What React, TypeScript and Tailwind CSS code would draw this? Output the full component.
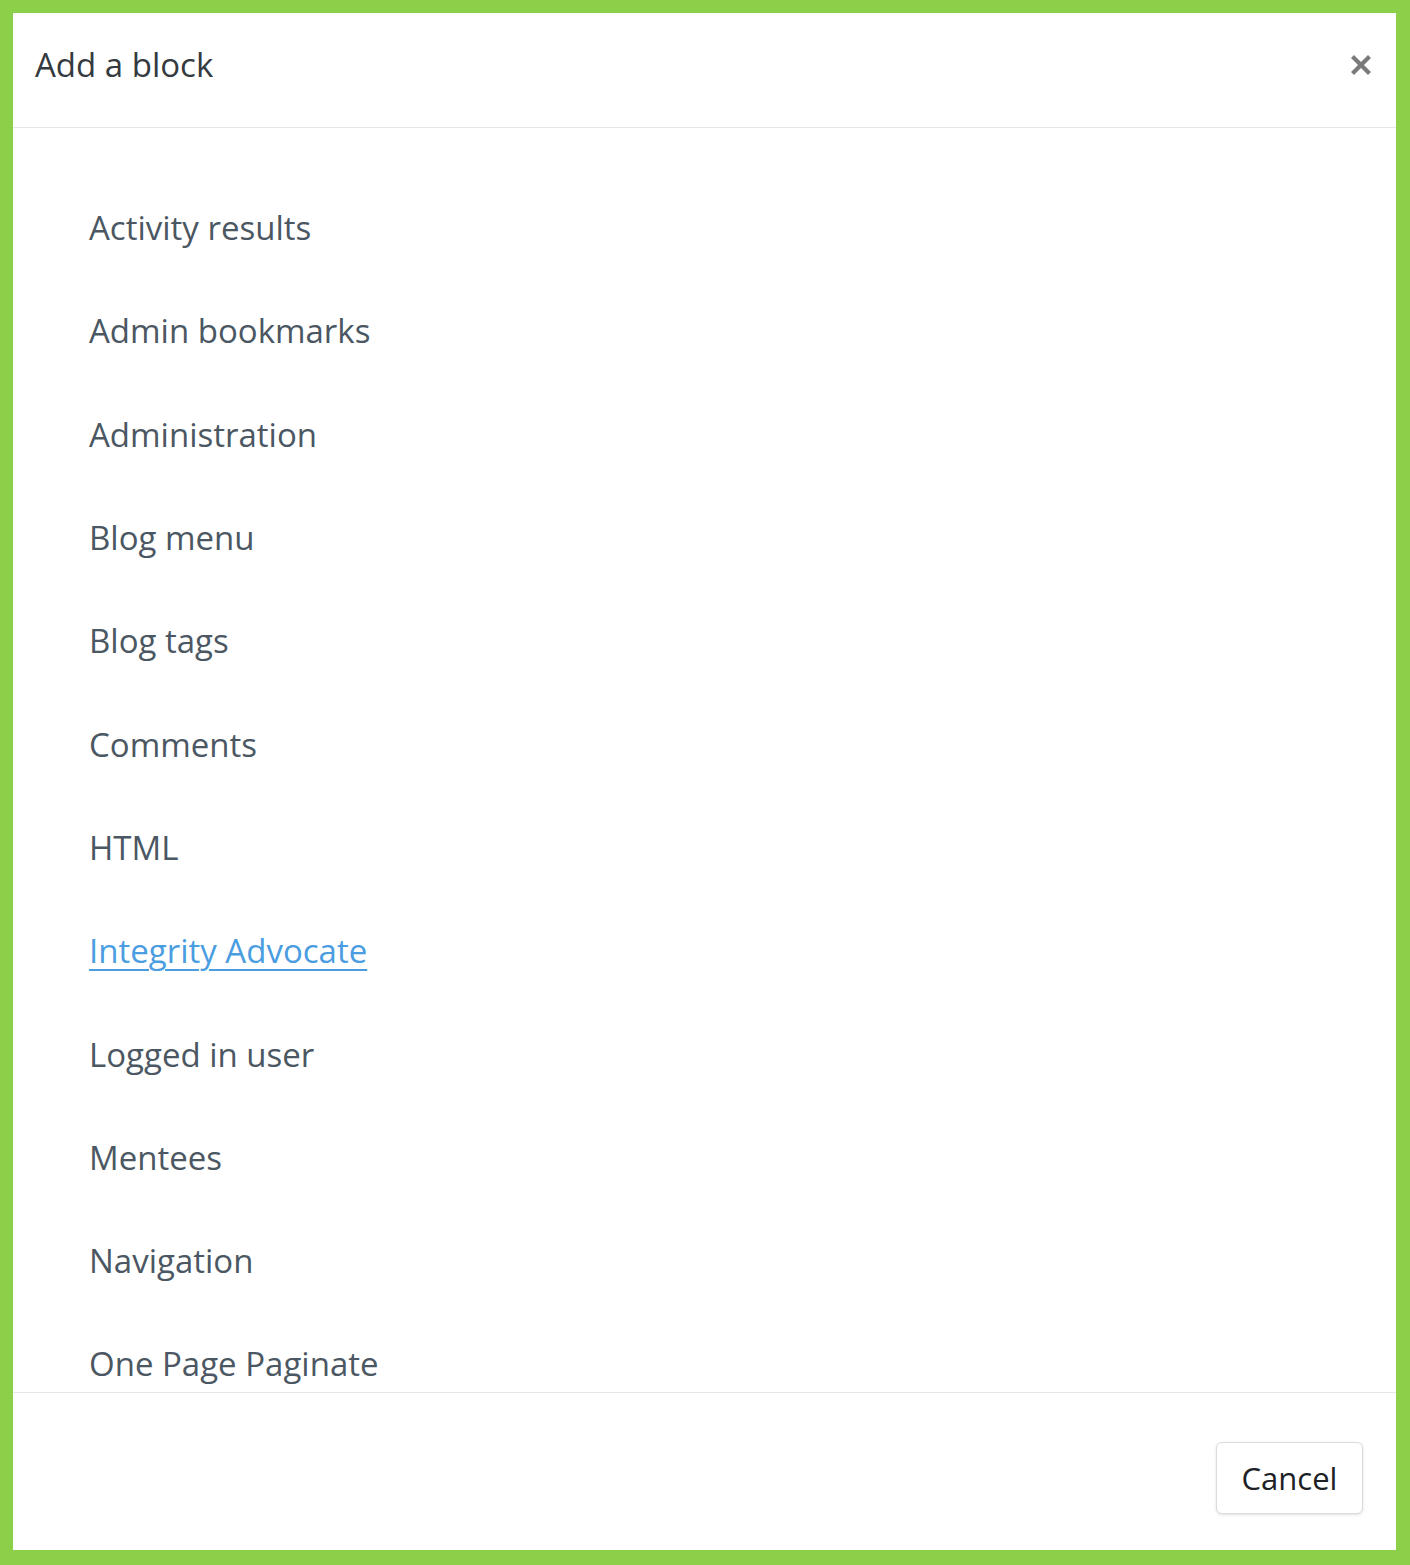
import React from "react";

const blocks = [
  "Activity results",
  "Admin bookmarks",
  "Administration",
  "Blog menu",
  "Blog tags",
  "Comments",
  "HTML",
  "Integrity Advocate",
  "Logged in user",
  "Mentees",
  "Navigation",
  "One Page Paginate",
];

const App: React.FC = () => {
  return (
    <div
      className="w-[1410px] h-[1565px] bg-[#8cd04a] pt-[13px] pl-[13px] pr-[14px] pb-[15px]"
      style={{ fontFamily: '"Open Sans", "Noto Sans", sans-serif' }}
    >
      <div className="w-full h-full bg-white flex flex-col">
        {/* Header */}
        <div className="h-[115px] shrink-0 flex items-center justify-between pl-[22px] pr-[23px] border-b border-[#e3e7e8] pb-[11px]">
          <h5 className="text-[33px] text-[#343a40] leading-none">Add a block</h5>
          <button className="w-[24px] h-[24px] flex items-center justify-center">
            <svg width="20" height="20" viewBox="0 0 20 20">
              <path d="M3 3 L17 17 M17 3 L3 17" stroke="#7a7a7a" strokeWidth="4.2" strokeLinecap="square" />
            </svg>
          </button>
        </div>

        {/* Body */}
        <div className="flex-1 overflow-hidden pt-[48px] pl-[76px]">
          {blocks.map((name) => (
            <div key={name} className="h-[103.3px] flex items-center">
              {name === "Integrity Advocate" ? (
                <a href="#" className="text-[33px] text-[#4a9de0] underline underline-offset-[6px] decoration-[2px] leading-none">
                  {name}
                </a>
              ) : (
                <span className="text-[33px] text-[#4b5762] leading-none">{name}</span>
              )}
            </div>
          ))}
        </div>

        {/* Footer */}
        <div className="h-[158px] shrink-0 border-t border-[#e3e7e8] flex justify-end items-start pt-[49px] pr-[33px]">
          <button className="w-[147px] h-[72px] border border-[#d9dcde] rounded-[6px] shadow-[0_1px_3px_rgba(0,0,0,0.12)] bg-white text-[31px] text-[#1d2125]">
            Cancel
          </button>
        </div>
      </div>
    </div>
  );
};

export default App;
